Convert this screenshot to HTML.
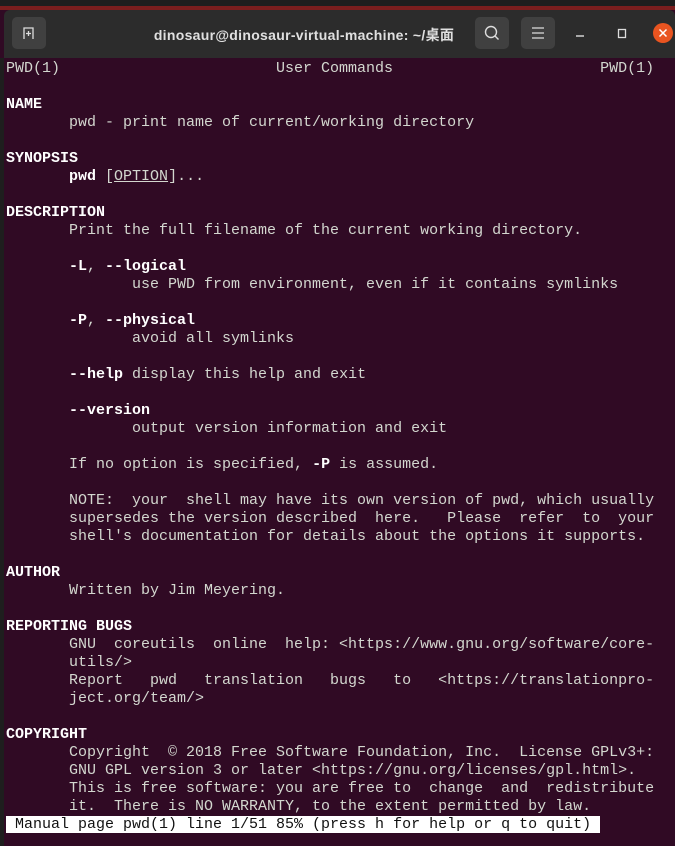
<!DOCTYPE html>
<html><head><meta charset="utf-8"><style>
body{margin:0;width:675px;height:846px;background:#300a24;overflow:hidden;position:relative;font-family:"Liberation Sans","Noto Sans CJK SC",sans-serif}
.top{position:absolute;left:0;top:0;width:675px;height:10px;background:#1e1e1e}
.red{position:absolute;left:0;top:6px;width:675px;height:4px;background:#7a1e1e}
.bar{position:absolute;left:4px;top:10px;width:671px;height:48px;background:#2c2c2c;border-radius:6px 6px 0 0}
.btn{position:absolute;top:7px;width:34px;height:32px;background:#404040;border-radius:5px}
.title{position:absolute;left:140px;width:320px;top:15px;text-align:center;color:#e0e0e0;font-weight:bold;font-size:14px;letter-spacing:0.3px;white-space:nowrap}
.side{position:absolute;left:0;top:58px;width:4px;height:788px;background:#1e1e1e}
pre{position:absolute;left:6px;top:60px;margin:0;font-family:"Liberation Mono",monospace;font-size:15px;line-height:18px;color:#d3d7cf}
b{color:#fff}
.st{background:#fff;color:#111}
</style></head><body>
<div class="top"></div><div class="red"></div>
<div class="bar">
<div class="btn" style="left:8px"><svg width="34" height="32"><path d="M12 22V11h9v11M14 16.5h5M16.5 14v5" stroke="#ddd" stroke-width="1.3" fill="none"/></svg></div>
<div class="title">dinosaur@dinosaur-virtual-machine: ~/桌面</div>
<div class="btn" style="left:471px"><svg width="34" height="32"><circle cx="16" cy="15" r="5.5" stroke="#ddd" stroke-width="1.4" fill="none"/><path d="M20 19l3.5 3.5" stroke="#ddd" stroke-width="1.4"/></svg></div>
<div class="btn" style="left:517px"><svg width="34" height="32"><path d="M11 11h12M11 16h12M11 21h12" stroke="#ddd" stroke-width="1.3"/></svg></div>
<svg style="position:absolute;left:564px;top:12px" width="107" height="24"><path d="M8 14h8" stroke="#ddd" stroke-width="1.4"/><rect x="50.5" y="7.5" width="7" height="8" stroke="#ddd" stroke-width="1.3" fill="none"/><circle cx="95" cy="11" r="10" fill="#e95420"/><path d="M91.5 7.5l7 7M98.5 7.5l-7 7" stroke="#fff" stroke-width="1.5"/></svg>
</div>
<div class="side"></div>
<pre>PWD(1)                        User Commands                       PWD(1)

<b>NAME</b>
       pwd - print name of current/working directory

<b>SYNOPSIS</b>
       <b>pwd</b> [<u>OPTION</u>]...

<b>DESCRIPTION</b>
       Print the full filename of the current working directory.

       <b>-L</b>, <b>--logical</b>
              use PWD from environment, even if it contains symlinks

       <b>-P</b>, <b>--physical</b>
              avoid all symlinks

       <b>--help</b> display this help and exit

       <b>--version</b>
              output version information and exit

       If no option is specified, <b>-P</b> is assumed.

       NOTE:  your  shell may have its own version of pwd, which usually
       supersedes the version described  here.   Please  refer  to  your
       shell's documentation for details about the options it supports.

<b>AUTHOR</b>
       Written by Jim Meyering.

<b>REPORTING BUGS</b>
       GNU  coreutils  online  help: &lt;https://www.gnu.org/software/core‐
       utils/&gt;
       Report   pwd   translation   bugs   to   &lt;https://translationpro‐
       ject.org/team/&gt;

<b>COPYRIGHT</b>
       Copyright  © 2018 Free Software Foundation, Inc.  License GPLv3+:
       GNU GPL version 3 or later &lt;https://gnu.org/licenses/gpl.html&gt;.
       This is free software: you are free to  change  and  redistribute
       it.  There is NO WARRANTY, to the extent permitted by law.
<span class="st"> Manual page pwd(1) line 1/51 85% (press h for help or q to quit) </span></pre>
</body></html>
